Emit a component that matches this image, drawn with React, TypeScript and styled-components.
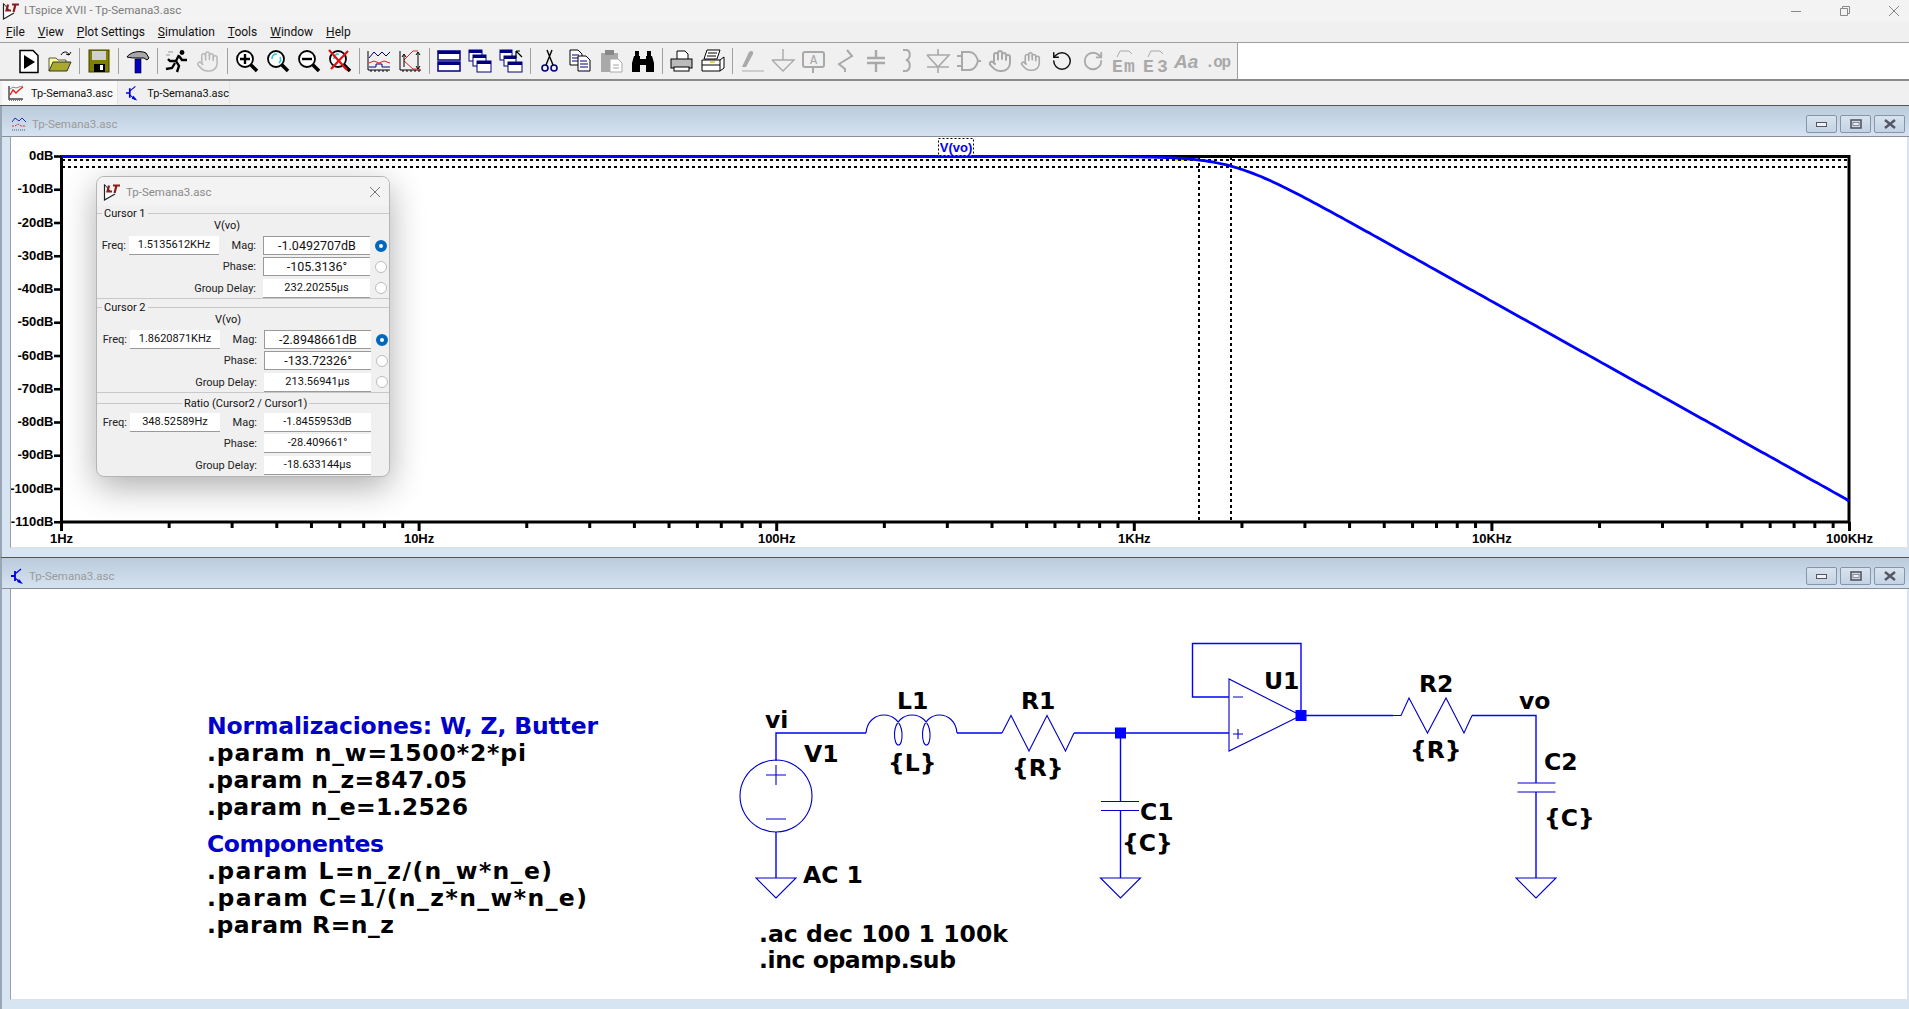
import React from "react";
import styled, { createGlobalStyle } from "styled-components";
import { Hand, RotateCcw, RotateCw } from "lucide-react";

const GRAY = "#a9a9a9";
const NAVY = "#00007f";

const GlobalStyle = createGlobalStyle`
  html, body { margin: 0; padding: 0; height: 100%; overflow: hidden; }
  body { font-family: Roboto, "Liberation Sans", sans-serif; font-size: 12px; color: #111; }
`;

// ---- little svg drawings ----
const IconSvg = styled.svg`
  overflow: visible;
`;

const Ic = ({ children }: { children: React.ReactNode }) => (
  <IconSvg width="24" height="24" viewBox="0 0 24 24" fill="none">{children}</IconSvg>
);

const LtLogo = ({ size = 18 }: { size?: number }) => (
  <svg width={size} height={size} viewBox="0 0 18 18" fill="none">
    <path d="M1.5 1.5V17L12 11" stroke="#222" strokeWidth="1.2" fill="#fff" />
    <path d="M1.5 1.5L7 8" stroke="#222" />
    <path d="M6 2.5L4.5 8.5H9M10 2.5H17M13.5 2.5L11.5 10" stroke="#8c1c1c" strokeWidth="2.2" />
  </svg>
);

const PlotGlyph = () => (
  <svg width="16" height="16" viewBox="0 0 16 16" fill="none">
    <path d="M1 1V14H15" stroke="#444" strokeWidth="1.4" />
    <path d="M1 15.5H15" stroke="#777" strokeDasharray="1 1" />
    <path d="M2 10L5 5L8 8L11 5L15 2" stroke="#e02020" strokeWidth="1.4" />
    <path d="M2 4L5 2L8 3L11 2L15 1" stroke="#888" />
  </svg>
);

const FadedPlotGlyph = () => (
  <svg width="16" height="16" viewBox="0 0 16 16" fill="none">
    <path d="M1 14H15" stroke="#555" strokeDasharray="1 1" />
    <path d="M1 6L4 2L8 5L11 2L15 6" stroke="#2030b0" />
    <path d="M1 10H4L7 8L10 10H15" stroke="#d03030" strokeDasharray="2 1" />
  </svg>
);

const TransistorGlyph = () => (
  <svg width="13" height="16" viewBox="0 0 13 16" fill="none">
    <path d="M0 8H4M4 3V13" stroke="#0000e0" strokeWidth="1.8" />
    <path d="M4 6L10 1M4 10L10 15" stroke="#0000e0" strokeWidth="1.2" />
    <path d="M8 11L12 16L6 14Z" fill="#0000e0" />
  </svg>
);

const Magnifier = ({ children }: { children?: React.ReactNode }) => (
  <Ic>
    <path d="M15 15L22 22" stroke="#000" strokeWidth="3.6" />
    <circle cx="10" cy="10" r="8" fill="#fff" stroke="#000" strokeWidth="1.8" />
    {children}
  </Ic>
);

const Win = ({ x, y, w, h }: { x: number; y: number; w: number; h: number }) => (
  <>
    <rect x={x} y={y} width={w} height={h} fill="#fff" stroke={NAVY} />
    <rect x={x} y={y} width={w} height={3} fill={NAVY} />
  </>
);

const Doc = ({ x, y }: { x: number; y: number }) => (
  <>
    <path d={`M${x} ${y}h8l4 4v11h-12z`} fill="#fff" stroke="#000" />
    <path d={`M${x + 2} ${y + 5}h7M${x + 2} ${y + 8}h8M${x + 2} ${y + 11}h8`} stroke={NAVY} />
  </>
);

const grayStroke = { stroke: GRAY, strokeWidth: 2 };

const toolGroups: React.ReactNode[][] = [
  [
    <Ic><path d="M3 1.5h13l5 5v17H3z" fill="#fff" stroke="#000" strokeWidth="1.5" /><path d="M7 6l11 7-11 7z" fill="#000" /></Ic>,
    <Ic><path d="M1 22V9h7l2 2h8v3" fill="#ffff9c" stroke="#555" /><path d="M1 22l4-9h18l-4 9z" fill="#a9a92c" stroke="#333" /><path d="M13 6c2-4 7-4 8 0m0 0l-3-1m3 1l2-3" stroke="#000" /></Ic>,
  ],
  [
    <Ic><rect x="2" y="1" width="20" height="22" fill="#808000" stroke="#404000" /><rect x="5" y="2" width="14" height="9" fill="#d0d0d0" /><rect x="7" y="15" width="11" height="8" fill="#000" /><rect x="13" y="16" width="3" height="5" fill="#fff" /></Ic>,
  ],
  [
    <Ic><path d="M1 8C4 3 14 1 20 4l3 5-2 2-3-2h-5c-5 0-8 0-12-1z" fill="#a8a8a8" stroke="#000" /><rect x="9" y="10" width="6" height="14" fill="#0000c8" stroke="#000" strokeWidth=".6" /></Ic>,
  ],
  [
    <Ic><circle cx="17" cy="3.5" r="2.4" fill="#000" /><path d="M14 6L11 12L5 12L3 10M14 7L17 11L22 11M11 12L14 17L12 23M10 14L7 19L1 20" stroke="#000" strokeWidth="2.4" /><path d="M3 3h5M1 6h4" stroke="#999" /></Ic>,
    <Hand size={23} color="#b8b8b8" strokeWidth={1.6} />,
  ],
  [
    <Magnifier><path d="M5 10h10M10 5v10" stroke="#000" strokeWidth="2.4" /></Magnifier>,
    <Magnifier><path d="M6 10c0-3 2-5 5-5M14 8c1 2 1 4-1 6" stroke="#27c8d8" strokeWidth="1.6" /></Magnifier>,
    <Magnifier><path d="M5 10h10" stroke="#000" strokeWidth="2.4" /></Magnifier>,
    <Magnifier><path d="M6 10c0-3 2-5 5-5" stroke="#27c8d8" strokeWidth="1.6" /><path d="M1 1L19 21M20 2L3 20" stroke="#e01010" strokeWidth="2.2" /></Magnifier>,
  ],
  [
    <Ic><path d="M1 2v19h22M4 21v2M8 21v2M12 21v2M16 21v2M20 21v2" stroke="#000" /><path d="M2 9l5-6 4 4 4-4 4 4 4-4" stroke={NAVY} /><path d="M2 14l5-2 5 2 5-2 6 2" stroke="#e02020" /><path d="M2 18h7v-3h6v3h8" stroke={NAVY} /></Ic>,
    <Ic><path d="M2 2v19h21M5 21v2M9 21v2M13 21v2M17 21v2M21 21v2" stroke="#000" /><path d="M6 11L15 2H20M6 12L15 20H22" stroke="#e02020" /><path d="M6 6v12M20 4v15" stroke="#000" /><path d="M4 8l2-3 2 3M18 6l2-3 2 3M18 17l2 3 2-3" stroke="#000" /></Ic>,
  ],
  [
    <Ic><rect x="1" y="2" width="22" height="9" fill="#fff" stroke={NAVY} strokeWidth="1.5" /><rect x="1" y="2" width="22" height="3" fill={NAVY} /><rect x="1" y="13" width="22" height="9" fill="#fff" stroke={NAVY} strokeWidth="1.5" /><rect x="1" y="13" width="22" height="3" fill={NAVY} /></Ic>,
    <Ic><Win x={1} y={1} w={13} h={11} /><Win x={5} y={6} w={13} h={11} /><Win x={9} y={12} w={14} h={11} /></Ic>,
    <Ic><Win x={1} y={1} w={12} h={10} /><Win x={5} y={7} w={12} h={10} /><Win x={9} y={13} w={14} h={10} /><path d="M17 2v7M17 2h4M17 2l6 6" stroke="#000" strokeWidth="1.2" /></Ic>,
  ],
  [
    <Ic><circle cx="7" cy="19" r="3" stroke={NAVY} strokeWidth="1.6" /><circle cx="16" cy="19" r="3" stroke={NAVY} strokeWidth="1.6" /><path d="M8 16L14 1M15 16L9 1" stroke="#000" strokeWidth="1.4" /></Ic>,
    <Ic><Doc x={1} y={1} /><Doc x={9} y={7} /></Ic>,
    <Ic><rect x="1" y="4" width="17" height="19" fill={GRAY} /><rect x="5" y="1" width="9" height="5" fill="#888" /><path d="M10 10h8l4 4v9H10z" fill="#fff" stroke={GRAY} /><path d="M13 16h6M13 19h6" stroke={GRAY} /></Ic>,
    <Ic><path d="M3 7h6v16H1v-9zM15 7h6l2 7v9h-8z" fill="#000" /><rect x="9" y="10" width="6" height="6" fill="#000" /><rect x="4" y="2" width="4" height="6" fill="#000" /><rect x="16" y="2" width="4" height="6" fill="#000" /></Ic>,
  ],
  [
    <Ic><path d="M7 2h8l3 3v6H7z" fill="#fff" stroke="#000" /><rect x="1" y="10" width="21" height="9" fill="#bbb" stroke="#000" /><rect x="4" y="18" width="15" height="4" fill="#fff" stroke="#000" /></Ic>,
    <Ic><path d="M6 1h13l-3 9H3z" fill="#fff" stroke="#000" /><path d="M7 4h9M6 7h9" stroke="#000" /><path d="M1 11h18l4-3v11l-4 3H1z" fill="#fff" stroke="#000" /><path d="M1 16h18M19 11v11" stroke="#000" /><path d="M9 13h5" stroke="#d8c020" strokeWidth="1.4" /></Ic>,
  ],
  [
    <Ic><path d="M2 18L9 3c2-2 5-1 4 2L6 18z" fill={GRAY} /><path d="M2 22h22" {...grayStroke} strokeWidth="1" /></Ic>,
    <Ic><path d="M12 0v11M1 11h22L12 22 1 11" stroke={GRAY} strokeWidth="1.4" /></Ic>,
    <Ic><rect x="1" y="3" width="21" height="15" rx="2" {...grayStroke} /><path d="M11 18v6" {...grayStroke} /><text x="11.5" y="15" fill={GRAY} textAnchor="middle" fontFamily="Liberation Mono" fontSize="12">A</text></Ic>,
    <Ic><path d="M14 1l5 6-13 8 6 5v3" {...grayStroke} /></Ic>,
    <Ic><path d="M12 1v8M3 9h18M3 14h18M12 14v9" stroke={GRAY} strokeWidth="2.4" /></Ic>,
    <Ic><path d="M8 1h3c5 0 5 9 0 10 5 1 5 10 0 11H8" {...grayStroke} /></Ic>,
    <Ic><path d="M12 0v6M1 6h22L12 18 1 6M1 18h22M12 18v6" stroke={GRAY} strokeWidth="1.6" /></Ic>,
    <Ic><path d="M0 7h5M0 17h5M5 3h7c5 0 8 5 9 9-1 4-4 9-9 9H5zM21 12h3" {...grayStroke} /></Ic>,
    <Hand size={24} color={GRAY} strokeWidth={2} />,
    <Hand size={21} color={GRAY} strokeWidth={1.8} />,
    <RotateCcw size={22} color="#111" strokeWidth={1.6} />,
    <RotateCw size={22} color={GRAY} strokeWidth={2} />,
    <Ic><path d="M5 8l3-6h9l3 3" stroke={GRAY} /><text x="0" y="23" fill={GRAY} fontFamily="Liberation Mono" fontWeight="700" fontSize="18">E</text><text x="12" y="23" fill={GRAY} fontFamily="Liberation Mono" fontWeight="700" fontSize="18">m</text></Ic>,
    <Ic><path d="M5 8l3-6h9l3 3" stroke={GRAY} /><text x="0" y="23" fill={GRAY} fontFamily="Liberation Mono" fontWeight="700" fontSize="18">E</text><text x="14" y="23" fill={GRAY} fontFamily="Liberation Mono" fontWeight="700" fontSize="18">3</text></Ic>,
    <Ic><text x="0" y="19" fill={GRAY} fontFamily="Liberation Sans" fontStyle="italic" fontWeight="700" fontSize="19">Aa</text></Ic>,
    <Ic><text x="0" y="18" fill={GRAY} fontFamily="Liberation Mono" fontWeight="700" fontSize="16" letterSpacing="-1.4">.op</text></Ic>,
  ],
];

// ---- app frame ----
const Root = styled.div`
  width: 1909px;
  height: 1009px;
  display: flex;
  flex-direction: column;
  position: relative;
  overflow: hidden;
  background: #f0f0f0;
`;

const TitleBar = styled.div`
  height: 22px;
  display: flex;
  align-items: center;
  padding-left: 2px;
  gap: 4px;
  background: #f3f3f3;
  color: #7c7c7c;
  font-size: 11.6px;
`;

const TitleText = styled.span`
  flex: 1;
  margin-top: -3px;
`;

const SysButton = styled.div`
  width: 30px;
  margin-left: 15px;
  display: flex;
  justify-content: center;
`;

const MenuBar = styled.div`
  height: 20px;
  display: flex;
  align-items: center;
  gap: 13px;
  padding-left: 6px;
  border-bottom: 1px solid #a0a0a0;
  background: #f0f0f0;
`;

const MenuItem = styled.span`
  font-size: 12px;
  color: #111;
  u { text-underline-offset: 1px; }
`;

const ToolRow = styled.div`
  height: 36px;
  display: flex;
  background: #fff;
  border-bottom: 2px solid #8a8a8a;
`;

const Toolbar = styled.div`
  width: 1238px;
  box-sizing: border-box;
  padding-left: 13px;
  display: flex;
  align-items: center;
  background: #f0f0f0;
  border-right: 1px solid #a0a0a0;
`;

const ToolGroup = styled.div`
  display: flex;
  & + & {
    margin-left: 3.5px;
    padding-left: 3.5px;
    border-left: 1px solid #a0a0a0;
  }
`;

const ToolButton = styled.div`
  width: 31px;
  height: 26px;
  display: flex;
  align-items: center;
  justify-content: center;
`;

const TabStrip = styled.div`
  height: 24px;
  display: flex;
  padding-left: 2px;
  background: #f0f0f0;
  border-bottom: 1px solid #555;
`;

const Tab = styled.div<{ $active?: boolean }>`
  width: ${(p) => (p.$active ? 116 : 112)}px;
  box-sizing: border-box;
  display: flex;
  align-items: center;
  gap: ${(p) => (p.$active ? 7 : 9)}px;
  padding-left: ${(p) => (p.$active ? 6 : 8)}px;
  background: ${(p) => (p.$active ? "#f9f9f9" : "#f0f0f0")};
  border-right: 1px solid #e4e4e4;
  color: #111;
  font-size: 11px;
  white-space: nowrap;
`;

const Mdi = styled.div`
  flex: 1;
  display: flex;
  flex-direction: column;
  min-height: 0;
  background: #d7e4f2;
`;

const Child = styled.div<{ $height?: number }>`
  ${(p) => (p.$height ? `height: ${p.$height}px; border-bottom: 1px solid #555;` : "flex: 1; min-height: 0;")}
  box-sizing: border-box;
  display: flex;
  flex-direction: column;
  padding: 0 2px 9px 0;
  border-left: 2px solid #97a5b4;
`;

const ChildHeader = styled.div`
  flex-shrink: 0;
  display: flex;
  align-items: center;
  padding: 6px 1px 0 9px;
  height: 24px;
  background: linear-gradient(#bccbdb, #d4e2f1);
  border-bottom: 1px solid #8a8f96;
  margin-right: -2px;
  color: #9a9a9a;
  font-size: 11.5px;
`;

const ChildTitle = styled.span`
  flex: 1;
  margin-left: 5px;
`;

const MdiButton = styled.div`
  width: 31px;
  height: 18px;
  margin-right: 3px;
  box-sizing: border-box;
  display: flex;
  align-items: center;
  justify-content: center;
  border: 1px solid #8696a8;
  border-radius: 2px;
  background: linear-gradient(#d8e3ee, #c4d3e3);
`;

const ChildBody = styled.div`
  flex: 1;
  min-height: 0;
  margin-left: 8px;
  background: #fff;
  border-left: 1px solid #a0a0a0;
  border-bottom: 1px solid #e0e0e0;
  overflow: hidden;
  svg { display: block; }
`;

// ---- plot ----
const AxisText = styled.text`
  font-family: "Liberation Sans", Arial, sans-serif;
  font-size: 13px;
  font-weight: 700;
  fill: #000;
`;

const TraceLabel = styled.text`
  font-family: "Liberation Sans", Arial, sans-serif;
  font-size: 13px;
  font-weight: 700;
  fill: #0000ff;
`;

const X0 = 61.5;
const DECADE = 357.6;
const TOP = 155.5;
const DB = 3.327;
const RIGHT = 1849;
const BOTTOM = 521;
const FC = 1880;

const curve = (() => {
  const pts: string[] = [];
  for (let x = X0; x <= RIGHT + 3; x += 4) {
    const f = Math.pow(10, (x - X0) / DECADE);
    const db = -10 * Math.log10(1 + Math.pow(f / FC, 6));
    pts.push(`${Math.min(x, RIGHT).toFixed(1)},${(TOP - db * DB).toFixed(1)}`);
  }
  return pts.join(" ");
})();

const xLabels = ["1Hz", "10Hz", "100Hz", "1KHz", "10KHz", "100KHz"];

const Plot = () => (
  <svg width="1896" height="411" viewBox="11 136 1896 411">
    <rect x={X0} y={TOP} width={RIGHT - X0} height={BOTTOM - TOP} fill="none" stroke="#000" strokeWidth="3" />
    {Array.from({ length: 12 }, (_, i) => {
      const y = TOP + i * 33.25;
      return (
        <g key={i}>
          <path d={`M54 ${y}H62`} stroke="#000" strokeWidth="2.6" />
          <AxisText x="53.5" y={y + 3.5} textAnchor="end">{i === 0 ? "0dB" : `-${i * 10}dB`}</AxisText>
        </g>
      );
    })}
    {xLabels.map((label, d) => {
      const x = X0 + d * DECADE;
      return (
        <g key={label}>
          <path d={`M${x} 521V530`} stroke="#000" strokeWidth="3" />
          <AxisText x={x} y="542" textAnchor="middle">{label}</AxisText>
          {d < 5 && [2, 3, 4, 5, 6, 7, 8, 9].map((m) => (
            <path key={m} d={`M${x + Math.log10(m) * DECADE} 521V527`} stroke="#000" strokeWidth="3" />
          ))}
        </g>
      );
    })}
    <path d="M62 159H1847M62 166H1847M1199 156V520M1231 156V520" stroke="#000" strokeWidth="2" strokeDasharray="3 3" />
    <path d="M1175 159H1207M1230 166H1240" stroke="#ffff00" strokeWidth="2" strokeDasharray="3 3" />
    <polyline points={curve} fill="none" stroke="#0000ff" strokeWidth="2.8" />
    <rect x="938.5" y="137.5" width="35" height="17" fill="#fff" stroke="#000" strokeDasharray="2 2" />
    <TraceLabel x="956" y="151" textAnchor="middle">V(vo)</TraceLabel>
  </svg>
);

// ---- cursor dialog ----
const Dialog = styled.div`
  position: absolute;
  left: 96px;
  top: 176px;
  width: 294px;
  height: 301px;
  box-sizing: border-box;
  border: 1px solid #b5b5b5;
  border-radius: 8px;
  background: #f0f0f0;
  box-shadow: 0 10px 34px rgba(0, 0, 0, 0.32);
  overflow: hidden;
`;

const DialogTitle = styled.div`
  height: 29px;
  display: flex;
  align-items: center;
  padding: 0 9px 0 6px;
  background: #f3f3f3;
  color: #8a8a8a;
  font-size: 11.5px;
`;

const Group = styled.div<{ $shift?: number; $top?: number }>`
  position: relative;
  height: 86px;
  box-sizing: border-box;
  padding: ${(p) => p.$top ?? 5}px 0 0 ${(p) => p.$shift ?? 0}px;
  border-top: 1px solid #c8c8c8;
  border-bottom: 1px solid #c8c8c8;
  margin-top: 7px;
  & + & { margin-top: 8px; }
`;

const LastGroup = styled(Group)`
  height: 75px;
  border-bottom: none;
  && { margin-top: 10px; }
`;

const Legend = styled.span<{ $center?: boolean }>`
  position: absolute;
  top: -7px;
  left: ${(p) => (p.$center ? "85px" : "5px")};
  padding: 0 2px;
  background: #f0f0f0;
  font-size: 11px;
  line-height: 13px;
  color: #111;
`;

const TraceName = styled.div`
  height: 13px;
  width: 260px;
  text-align: center;
  font-size: 11px;
  line-height: 13px;
  margin-bottom: 3px;
`;

const Row = styled.div`
  display: grid;
  grid-template-columns: 32px 90px 44px 107px 22px;
  height: 21.3px;
  align-items: center;
`;

const FieldLabel = styled.span<{ $wide?: boolean }>`
  ${(p) => (p.$wide ? "grid-column: 1 / 4;" : "")}
  text-align: right;
  padding-right: ${(p) => (p.$wide ? 7 : 3)}px;
  font-size: 11px;
  color: #222;
`;

const ShortLabel = styled(FieldLabel)`
  padding-right: 7px;
`;

const Value = styled.div<{ $sunken?: boolean; $big?: boolean }>`
  height: 19px;
  box-sizing: border-box;
  background: #fff;
  text-align: center;
  font-size: ${(p) => (p.$big ? 12.5 : 11)}px;
  line-height: 18px;
  color: #111;
  border-bottom: 1px solid #9a9a9a;
  ${(p) => (p.$sunken ? "border-left: 1px solid #999; border-top: 1px solid #999;" : "")}
`;

const Radio = styled.span<{ $on?: boolean }>`
  justify-self: center;
  width: 12px;
  height: 12px;
  box-sizing: border-box;
  border-radius: 50%;
  background: #fff;
  border: ${(p) => (p.$on ? "4px solid #0067c0" : "1px solid #bcbcbc")};
`;

type CursorRow = { freq: string; mag: string; phase: string; delay: string };

const CursorRows = ({ r, big }: { r: CursorRow; big?: boolean }) => (
  <>
    <Row>
      <FieldLabel>Freq:</FieldLabel>
      <Value>{r.freq}</Value>
      <ShortLabel>Mag:</ShortLabel>
      <Value $sunken={big} $big={big}>{r.mag}</Value>
      {big && <Radio $on />}
    </Row>
    <Row>
      <FieldLabel $wide>Phase:</FieldLabel>
      <Value $sunken={big} $big={big}>{r.phase}</Value>
      {big && <Radio />}
    </Row>
    <Row>
      <FieldLabel $wide>Group Delay:</FieldLabel>
      <Value>{r.delay}</Value>
      {big && <Radio />}
    </Row>
  </>
);

const CursorDialog = () => (
  <Dialog>
    <DialogTitle>
      <LtLogo />
      <ChildTitle>Tp-Semana3.asc</ChildTitle>
      <svg width="10" height="10" viewBox="0 0 10 10"><path d="M0 0L10 10M10 0L0 10" stroke="#777" /></svg>
    </DialogTitle>
    <Group>
      <Legend>Cursor 1</Legend>
      <TraceName>V(vo)</TraceName>
      <CursorRows big r={{ freq: "1.5135612KHz", mag: "-1.0492707dB", phase: "-105.3136°", delay: "232.20255µs" }} />
    </Group>
    <Group $shift={1}>
      <Legend>Cursor 2</Legend>
      <TraceName>V(vo)</TraceName>
      <CursorRows big r={{ freq: "1.8620871KHz", mag: "-2.8948661dB", phase: "-133.72326°", delay: "213.56941µs" }} />
    </Group>
    <LastGroup $shift={1} $top={8}>
      <Legend $center>Ratio (Cursor2 / Cursor1)</Legend>
      <CursorRows r={{ freq: "348.52589Hz", mag: "-1.8455953dB", phase: "-28.409661°", delay: "-18.633144µs" }} />
    </LastGroup>
  </Dialog>
);

// ---- schematic ----
const SchText = styled.text<{ $blue?: boolean }>`
  font-family: "DejaVu Sans", "Noto Sans", sans-serif;
  font-size: 23.5px;
  font-weight: 700;
  fill: ${(p) => (p.$blue ? "#0000cd" : "#000")};
`;

const Wire = styled.path`
  fill: none;
  stroke: #0000ff;
  stroke-width: 1.4;
`;

const Part = styled.path`
  fill: none;
  stroke: #0000c8;
  stroke-width: 1.1;
`;

const Junction = ({ x, y }: { x: number; y: number }) => (
  <rect x={x - 5.5} y={y - 5.5} width="11" height="11" fill="#0000ff" />
);

const Ground = ({ x }: { x: number }) => <Part d={`M${x} 877H${x - 20}L${x} 897L${x + 20} 877H${x}`} />;

const labels: [string, number, number][] = [
  ["vi", 765, 727],
  ["V1", 804, 761],
  ["L1", 897, 708],
  ["{L}", 888, 770],
  ["R1", 1021, 708],
  ["{R}", 1012, 775],
  ["C1", 1140, 819],
  ["{C}", 1122, 850],
  ["AC 1", 803, 882],
  ["U1", 1264, 688],
  ["R2", 1419, 691],
  ["{R}", 1410, 757],
  ["vo", 1519, 708],
  ["C2", 1544, 769],
  ["{C}", 1544, 825],
];

// last number is the width each line has in the reference
const directives: [string, number, number, number, boolean?][] = [
  ["Normalizaciones: W, Z, Butter", 207, 733, 391, true],
  [".param n_w=1500*2*pi", 207, 760, 319],
  [".param n_z=847.05", 207, 787, 260],
  [".param n_e=1.2526", 207, 814, 261],
  ["Componentes", 207, 851, 177, true],
  [".param L=n_z/(n_w*n_e)", 207, 878, 345],
  [".param C=1/(n_z*n_w*n_e)", 207, 905, 380],
  [".param R=n_z", 207, 932, 187],
  [".ac dec 100 1 100k", 759, 941, 249],
  [".inc opamp.sub", 759, 967, 197],
];

const Schematic = () => (
  <svg width="1896" height="412" viewBox="11 588 1896 412">
    <Wire d="M866 732H776V760M776 831V877M957 732H1002M1074 732H1229M1120.5 732V800.5M1120.5 809.5V877" />
    <Wire d="M1229 696H1192.5V642.5H1301V714.5H1393M1472 714.5H1536V782M1536 791V877" />
    <Part d="M776 759a36 36 0 1 0 0.01 0M766 774H786M776 764V784M766 818H786" />
    <Ground x={776} />
    <Part d="M866 732C868 708 900 708 902 732C903 748 894 748 894.5 732C896 708 928 708 930 732C931 748 922 748 922.5 732C924 708 955 708 957 732" />
    <Part d="M1002 732L1011 714.5L1029 750L1047 714.5L1065.5 750L1074 732" />
    <Part d="M1101 800.5H1139M1101 809.5H1139" />
    <Ground x={1120.5} />
    <Part d="M1229 678V750L1301 714.5ZM1233 696H1243M1233 733H1243M1238 728V738" />
    <Part d="M1393 714.5H1401L1409 697L1427.5 732L1446 697L1464 732L1472 714.5" />
    <Part d="M1517.5 782H1555.5M1517.5 791H1555.5" />
    <Ground x={1536} />
    <Junction x={1120.5} y={732} />
    <Junction x={1301} y={714.5} />
    {labels.map(([t, x, y]) => (
      <SchText key={`${t}${x}`} x={x} y={y}>{t}</SchText>
    ))}
    {directives.map(([t, x, y, w, blue]) => (
      <SchText key={t} x={x} y={y} $blue={blue} textLength={w} lengthAdjust="spacing">{t}</SchText>
    ))}
  </svg>
);

const MdiControls = () => (
  <>
    <MdiButton><svg width="12" height="6"><rect x=".5" y="1.5" width="10" height="4" fill="#eef2f6" stroke="#556" /></svg></MdiButton>
    <MdiButton><svg width="12" height="10"><rect x="1" y="1" width="10" height="8" fill="none" stroke="#556" strokeWidth="1.6" /><rect x="3" y="3.5" width="6" height="3" fill="#eef2f6" stroke="#556" strokeWidth=".6" /></svg></MdiButton>
    <MdiButton><svg width="12" height="10"><path d="M1 1L11 9M11 1L1 9" stroke="#556" strokeWidth="2.4" /></svg></MdiButton>
  </>
);

const menus: [string, string][] = [
  ["F", "ile"],
  ["V", "iew"],
  ["P", "lot Settings"],
  ["S", "imulation"],
  ["T", "ools"],
  ["W", "indow"],
  ["H", "elp"],
];

const App = () => {
  return (
    <Root>
      <GlobalStyle />
      <TitleBar>
        <LtLogo />
        <TitleText>LTspice XVII - Tp-Semana3.asc</TitleText>
        <SysButton><svg width="10" height="10"><path d="M0 5.5H10" stroke="#888" /></svg></SysButton>
        <SysButton><svg width="10" height="10"><path d="M.5 2.5H7.5V9.5H.5ZM2.5 2V.5H9.5V7.5H8" fill="none" stroke="#888" /></svg></SysButton>
        <SysButton><svg width="10" height="10"><path d="M0 0L10 10M10 0L0 10" stroke="#888" /></svg></SysButton>
      </TitleBar>
      <MenuBar>
        {menus.map(([first, rest]) => (
          <MenuItem key={first}><u>{first}</u>{rest}</MenuItem>
        ))}
      </MenuBar>
      <ToolRow>
        <Toolbar>
          {toolGroups.map((group, g) => (
            <ToolGroup key={g}>
              {group.map((icon, i) => (
                <ToolButton key={i}>{icon}</ToolButton>
              ))}
            </ToolGroup>
          ))}
        </Toolbar>
      </ToolRow>
      <TabStrip>
        <Tab $active><PlotGlyph />Tp-Semana3.asc</Tab>
        <Tab><TransistorGlyph />Tp-Semana3.asc</Tab>
      </TabStrip>
      <Mdi>
        <Child $height={452}>
          <ChildHeader>
            <FadedPlotGlyph />
            <ChildTitle>Tp-Semana3.asc</ChildTitle>
            <MdiControls />
          </ChildHeader>
          <ChildBody><Plot /></ChildBody>
        </Child>
        <Child>
          <ChildHeader>
            <TransistorGlyph />
            <ChildTitle>Tp-Semana3.asc</ChildTitle>
            <MdiControls />
          </ChildHeader>
          <ChildBody><Schematic /></ChildBody>
        </Child>
      </Mdi>
      <CursorDialog />
    </Root>
  );
};

export default App;
